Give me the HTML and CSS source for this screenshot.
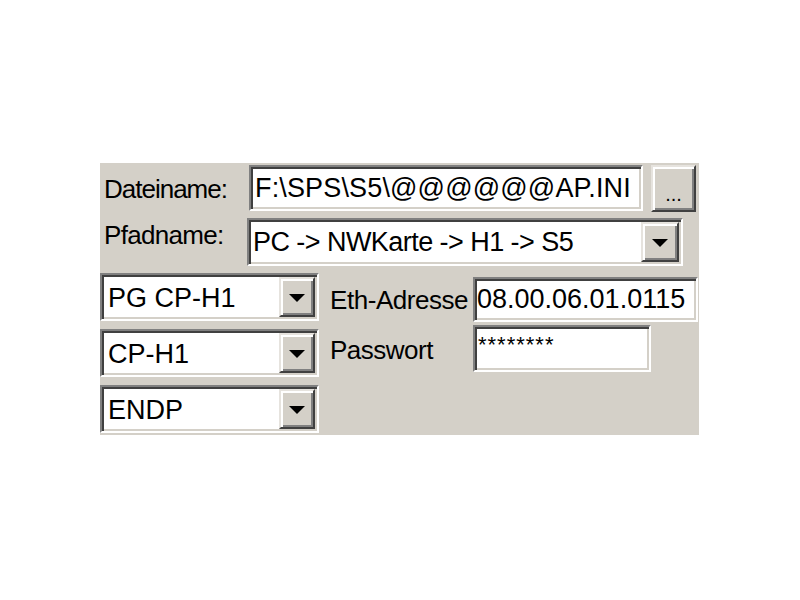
FILE: index.html
```html
<!DOCTYPE html>
<html>
<head>
<meta charset="utf-8">
<link rel="stylesheet" href="styles.css">
</head>
<body>
<div class="panel">
  <div class="row r1">
    <span class="label l-datei">Dateiname:</span>
    <div class="field f-datei"><span class="ftext t-datei">F:\SPS\S5\@@@@@@AP.INI</span></div>
    <div class="btn dots">...</div>
  </div>
  <div class="row r2">
    <span class="label l-pfad">Pfadname:</span>
    <div class="combo c-pfad"><span class="ctext t-pfad">PC -&gt; NWKarte -&gt; H1 -&gt; S5</span><span class="btn arrowbtn"><span class="arrow"></span></span></div>
  </div>
  <div class="bottom">
    <div class="col-left">
      <div class="combo c-small"><span class="ctext t-small">PG CP-H1</span><span class="btn arrowbtn"><span class="arrow"></span></span></div>
      <div class="combo c-small"><span class="ctext t-small">CP-H1</span><span class="btn arrowbtn"><span class="arrow"></span></span></div>
      <div class="combo c-small"><span class="ctext t-small">ENDP</span><span class="btn arrowbtn"><span class="arrow"></span></span></div>
    </div>
    <div class="right">
      <span class="label l-eth">Eth-Adresse</span>
      <div class="field f-eth"><span class="ftext t-eth">08.00.06.01.0115</span></div>
      <span class="label l-pw">Passwort</span>
      <div class="field f-pw"><span class="pwtext">********</span></div>
    </div>
  </div>
</div>
</body>
</html>
```
FILE: styles.css
```css
html, body {
  margin: 0;
  padding: 0;
  background: #ffffff;
}
body {
  width: 800px;
  height: 600px;
  font-family: "Liberation Sans", Arial, sans-serif;
  color: #000;
}
.panel {
  margin: 163px 0 0 100px;
  width: 599px;
  height: 272px;
  background: #d4d0c8;
  box-sizing: border-box;
  overflow: hidden;
}
.row {
  display: flex;
}
.r1 {
  margin-top: 2px;
  height: 47px;
  align-items: center;
}
.label {
  font-size: 26px;
  line-height: 26px;
  white-space: nowrap;
}
.l-datei {
  box-sizing: border-box;
  width: 149px;
  padding-left: 4px;
  letter-spacing: -1px;
}
.field {
  box-sizing: border-box;
  background: #fff;
  border: 2px solid;
  border-color: #808080 #ffffff #ffffff #808080;
  box-shadow: inset 2px 2px 0 #404040, inset -2px -2px 0 #d4d0c8;
  display: flex;
  align-items: center;
  overflow: hidden;
}
.ftext, .ctext {
  font-size: 27px;
  line-height: 27px;
  white-space: nowrap;
}
.f-datei {
  width: 394px;
  height: 46px;
  align-self: flex-start;
  padding-left: 4px;
}
.t-datei {
  letter-spacing: 0.15px;
}
.btn {
  box-sizing: border-box;
  background: #d4d0c8;
  border: 2px solid;
  border-color: #e6e3de #404040 #404040 #e6e3de;
  box-shadow: inset 2px 2px 0 #ffffff, inset -2px -2px 0 #808080;
  display: flex;
}
.dots {
  margin-left: 8px;
  width: 45px;
  height: 47px;
  justify-content: center;
  align-items: flex-end;
  padding-bottom: 6px;
  font-size: 20px;
  line-height: 20px;
}
.r2 {
  margin-top: 6px;
  height: 48px;
}
.l-pfad {
  box-sizing: border-box;
  width: 147px;
  padding-left: 4px;
  margin-top: 4px;
  letter-spacing: -0.7px;
}
.combo {
  box-sizing: border-box;
  background: #fff;
  border: 2px solid;
  border-color: #808080 #ffffff #ffffff #808080;
  box-shadow: inset 2px 2px 0 #404040, inset -2px -2px 0 #d4d0c8;
  display: flex;
  align-items: stretch;
  padding: 2px;
}
.c-pfad {
  width: 436px;
  height: 48px;
}
.ctext {
  flex: 1;
  display: flex;
  align-items: center;
  overflow: hidden;
}
.t-pfad {
  padding-left: 2px;
  letter-spacing: -0.55px;
}
.arrowbtn {
  align-items: center;
  justify-content: center;
  flex: none;
}
.c-pfad .arrowbtn {
  width: 38px;
}
.arrow {
  width: 0;
  height: 0;
  border-left: 8px solid transparent;
  border-right: 8px solid transparent;
  border-top: 8px solid #000;
  margin-top: 2px;
}
.bottom {
  margin-top: 7px;
  display: flex;
}
.col-left {
  width: 219px;
  display: flex;
  flex-direction: column;
  gap: 8px;
}
.c-small {
  width: 219px;
  height: 48px;
}
.t-small {
  padding-left: 4px;
  padding-top: 3px;
}
.c-small .arrowbtn {
  width: 36px;
}
.right {
  margin-left: 11px;
  display: grid;
  grid-template-columns: 143px auto;
  grid-template-rows: 45px 47px;
  row-gap: 3px;
  margin-top: 4px;
  align-items: center;
}
.l-eth {
  letter-spacing: -0.45px;
}
.l-pw {
  margin-top: 3px;
  letter-spacing: -0.5px;
}
.f-eth {
  width: 225px;
  height: 45px;
  padding-left: 2px;
}
.f-pw {
  width: 178px;
  height: 47px;
  align-items: flex-start;
  padding: 7px 0 0 3px;
}
.pwtext {
  font-size: 22px;
  line-height: 22px;
  letter-spacing: 1px;
}
```
